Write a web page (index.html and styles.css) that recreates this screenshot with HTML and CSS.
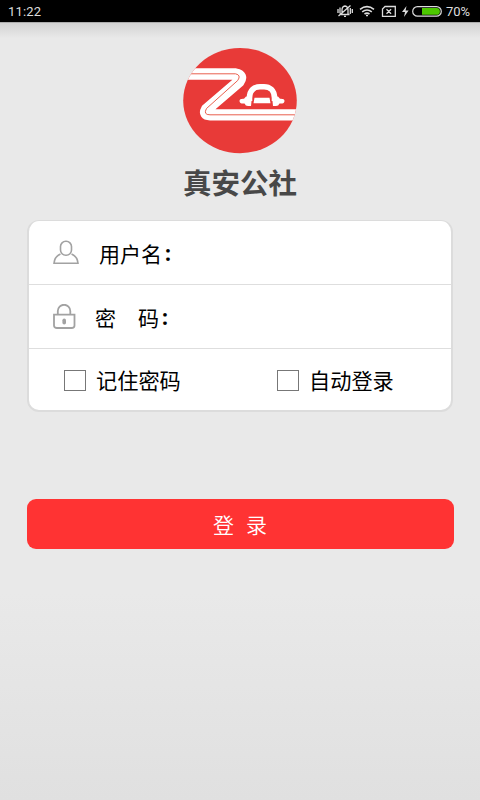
FILE: index.html
```html
<!DOCTYPE html>
<html lang="zh-CN">
<head>
<meta charset="utf-8">
<title>真安公社</title>
<link rel="stylesheet" href="styles.css">
</head>
<body>
<header class="status">
  <span class="time">11:22</span>
  <svg class="status-icons" width="106" height="22" viewBox="336 0 106 22" fill="none" stroke="#ddd" stroke-width="1.3">
    <path d="M340.500 14.500h9M342 14V10q0-3.500 3-4 3 .5 3 4v4M344 16.300h2M338.500 16L350.500 5.500M340 7.500v6M338 9v4M350.300 8v6M352.300 9v4"/>
    <path stroke-width="1.600" d="M360 9.300q7-5.300 14 0M362.200 11.800q4.800-3.600 9.600 0M364.500 14q2.500-1.800 5 0"/>
    <path d="M366 15.500h2"/>
    <path d="M385 6.500h10.300v9.800h-12.800v-7.300zM386.500 9.200l4.600 4.600M391.100 9.200l-4.600 4.600"/>
    <path d="M406.500 6l-4.500 6h3l-1 5 4.600-6.400h-3z" fill="#ddd" stroke="none"/>
    <rect x="412.700" y="6.600" width="28.600" height="9.600" rx="4.800" stroke-width="1.200"/>
    <path d="M422 8h14.500a3.400 3.400 0 0 1 0 6.800H422z" fill="#4cc800" stroke="none"/>
  </svg>
  <span class="percent">70%</span>
</header>
<main class="page">
  <svg class="logo" width="114" height="106" viewBox="183 48 114 106">
    <clipPath id="disc"><ellipse cx="240" cy="100.600" rx="56.800" ry="52.600"/></clipPath>
    <g clip-path="url(#disc)" fill="none">
      <path fill="#e83a38" d="M183 48h114v106H183z"/>
      <path stroke="#fff" stroke-width="11.300" d="M180 74H235.500Q243.500 75.500 239 81.500L206.500 109.500Q203.500 114.800 210 114.800H300"/>
      <path stroke="#e9604f" d="M180 73.800H235.500Q241.500 75 237.700 80.500L206.500 108.500Q203 114.800 210 114.800H300"/>
      <path stroke="#fff" stroke-width="5.600" d="M249.500 101V98C249.500 90 254.500 86.800 260 86.800H264C269.500 86.800 274.500 90 274.500 98V101"/>
      <path fill="#fff" d="M246 96.500h6l-1 9.500h-3q-2.500 0-3.500-2.500-5 .5-5-2.500 0-2.500 4.500-2.200zM278 96.500h-6l1 9.500h3q2.500 0 3.500-2.500 5 .5 5-2.500 0-2.500-4.500-2.200zM254.500 97.700h15l1 5.600H253.500z"/>
    </g>
  </svg>
  <h1 class="brand">真安公社</h1>
  <form class="card">
    <label class="row">
      <svg class="icon" width="26" height="26" viewBox="0 0 26 26" fill="none" stroke="#a2a2a2" stroke-width="1.600">
        <rect x="7.500" y="1.300" width="11" height="14" rx="5.300"/>
        <path d="M7.500 14Q1.500 16.500 1 23.300H25Q24.500 16.500 18.500 14"/>
      </svg>
      <span class="label user">用户名<b class="colon">:</b></span>
    </label>
    <label class="row">
      <svg class="icon" width="26" height="26" viewBox="0 0 26 26" fill="none" stroke="#a2a2a2" stroke-width="1.800">
        <path d="M4.800 10.500V7a6 6 0 0 1 12.500 0V10.500"/>
        <path d="M1 10.700H21.500V21.500Q21.500 24 18.500 24H4Q1 24 1 21.500z"/>
        <path stroke-width="3.600" stroke-linecap="round" d="M11.200 16.300v2.400"/>
      </svg>
      <span class="label pass"><span>密</span><span class="code">码</span><b class="colon">:</b></span>
    </label>
    <div class="row options">
      <label class="option"><span class="box"></span>记住密码</label>
      <label class="option"><span class="box"></span>自动登录</label>
    </div>
  </form>
  <button class="login" type="button"><span>登</span><span>录</span></button>
</main>
</body>
</html>
```

FILE: styles.css
```css
* { box-sizing: border-box; }
body {
  margin: 0;
  height: 800px;
  overflow: hidden;
  font-family: "Noto Sans CJK SC", sans-serif;
  color: #000;
}
.status {
  height: 22px;
  padding: 0 8px;
  display: flex;
  align-items: center;
  background: #000;
  color: #ddd;
  font: 13px/22px Roboto, sans-serif;
}
.time { flex: 1; padding-top: 1px; letter-spacing: 0.2px; }
.percent { width: 26px; margin-left: 4px; padding-top: 1px; font-size: 13px; }
.page {
  height: 778px;
  padding: 26px 27px 0;
  display: flex;
  flex-direction: column;
  align-items: center;
  background:
    linear-gradient(#888 0, #d2d2d2 1px, #e9e9e900 16px),
    linear-gradient(#e9e9e9 0, #e9e9e9 570px, #e0e0e0 778px);
}
.logo { display: block; }
.brand {
  margin: 10px 0 0;
  height: 36px;
  font-size: 28.5px;
  line-height: 36px;
  font-weight: 700;
  color: #484848;
  white-space: nowrap;
}
.card {
  width: 426px;
  height: 192px;
  margin-top: 20px;
  display: flex;
  flex-direction: column;
  background: #fff;
  border: 2px solid #dcdcdc;
  border-top-width: 1px;
  border-radius: 12px;
}
.row {
  height: 64px;
  padding-left: 24px;
  flex-shrink: 0;
  display: flex;
  align-items: center;
  border-bottom: 1px solid #dedede;
}
.row:last-child { border: 0; height: 61px; }
.label {
  display: flex;
  padding-top: 1px;
  font-size: 21px;
  line-height: 30px;
}
.user { margin-left: 20px; }
.pass { margin-left: 16px; }
.code { margin-left: 22px; }
.colon { margin-left: 3px; font-family: "Noto Sans", sans-serif; }
.options { padding-left: 35px; }
.option {
  width: 213px;
  flex-shrink: 0;
  display: flex;
  align-items: center;
  font-size: 21.2px;
  line-height: 30px;
}
.option + .option { width: 150px; }
.box {
  width: 22px;
  height: 21px;
  margin: 1px 10px 0 0;
  border: 1px solid #777;
}
.login {
  width: 427px;
  height: 50px;
  margin-top: 87px;
  padding: 0;
  display: flex;
  align-items: center;
  justify-content: center;
  gap: 12px;
  border: 0;
  border-radius: 9px;
  background: #f33;
  color: #fff;
  font: 350 21px/30px "Noto Sans CJK SC", sans-serif;
}
.login span { margin-top: -1px; }
```
